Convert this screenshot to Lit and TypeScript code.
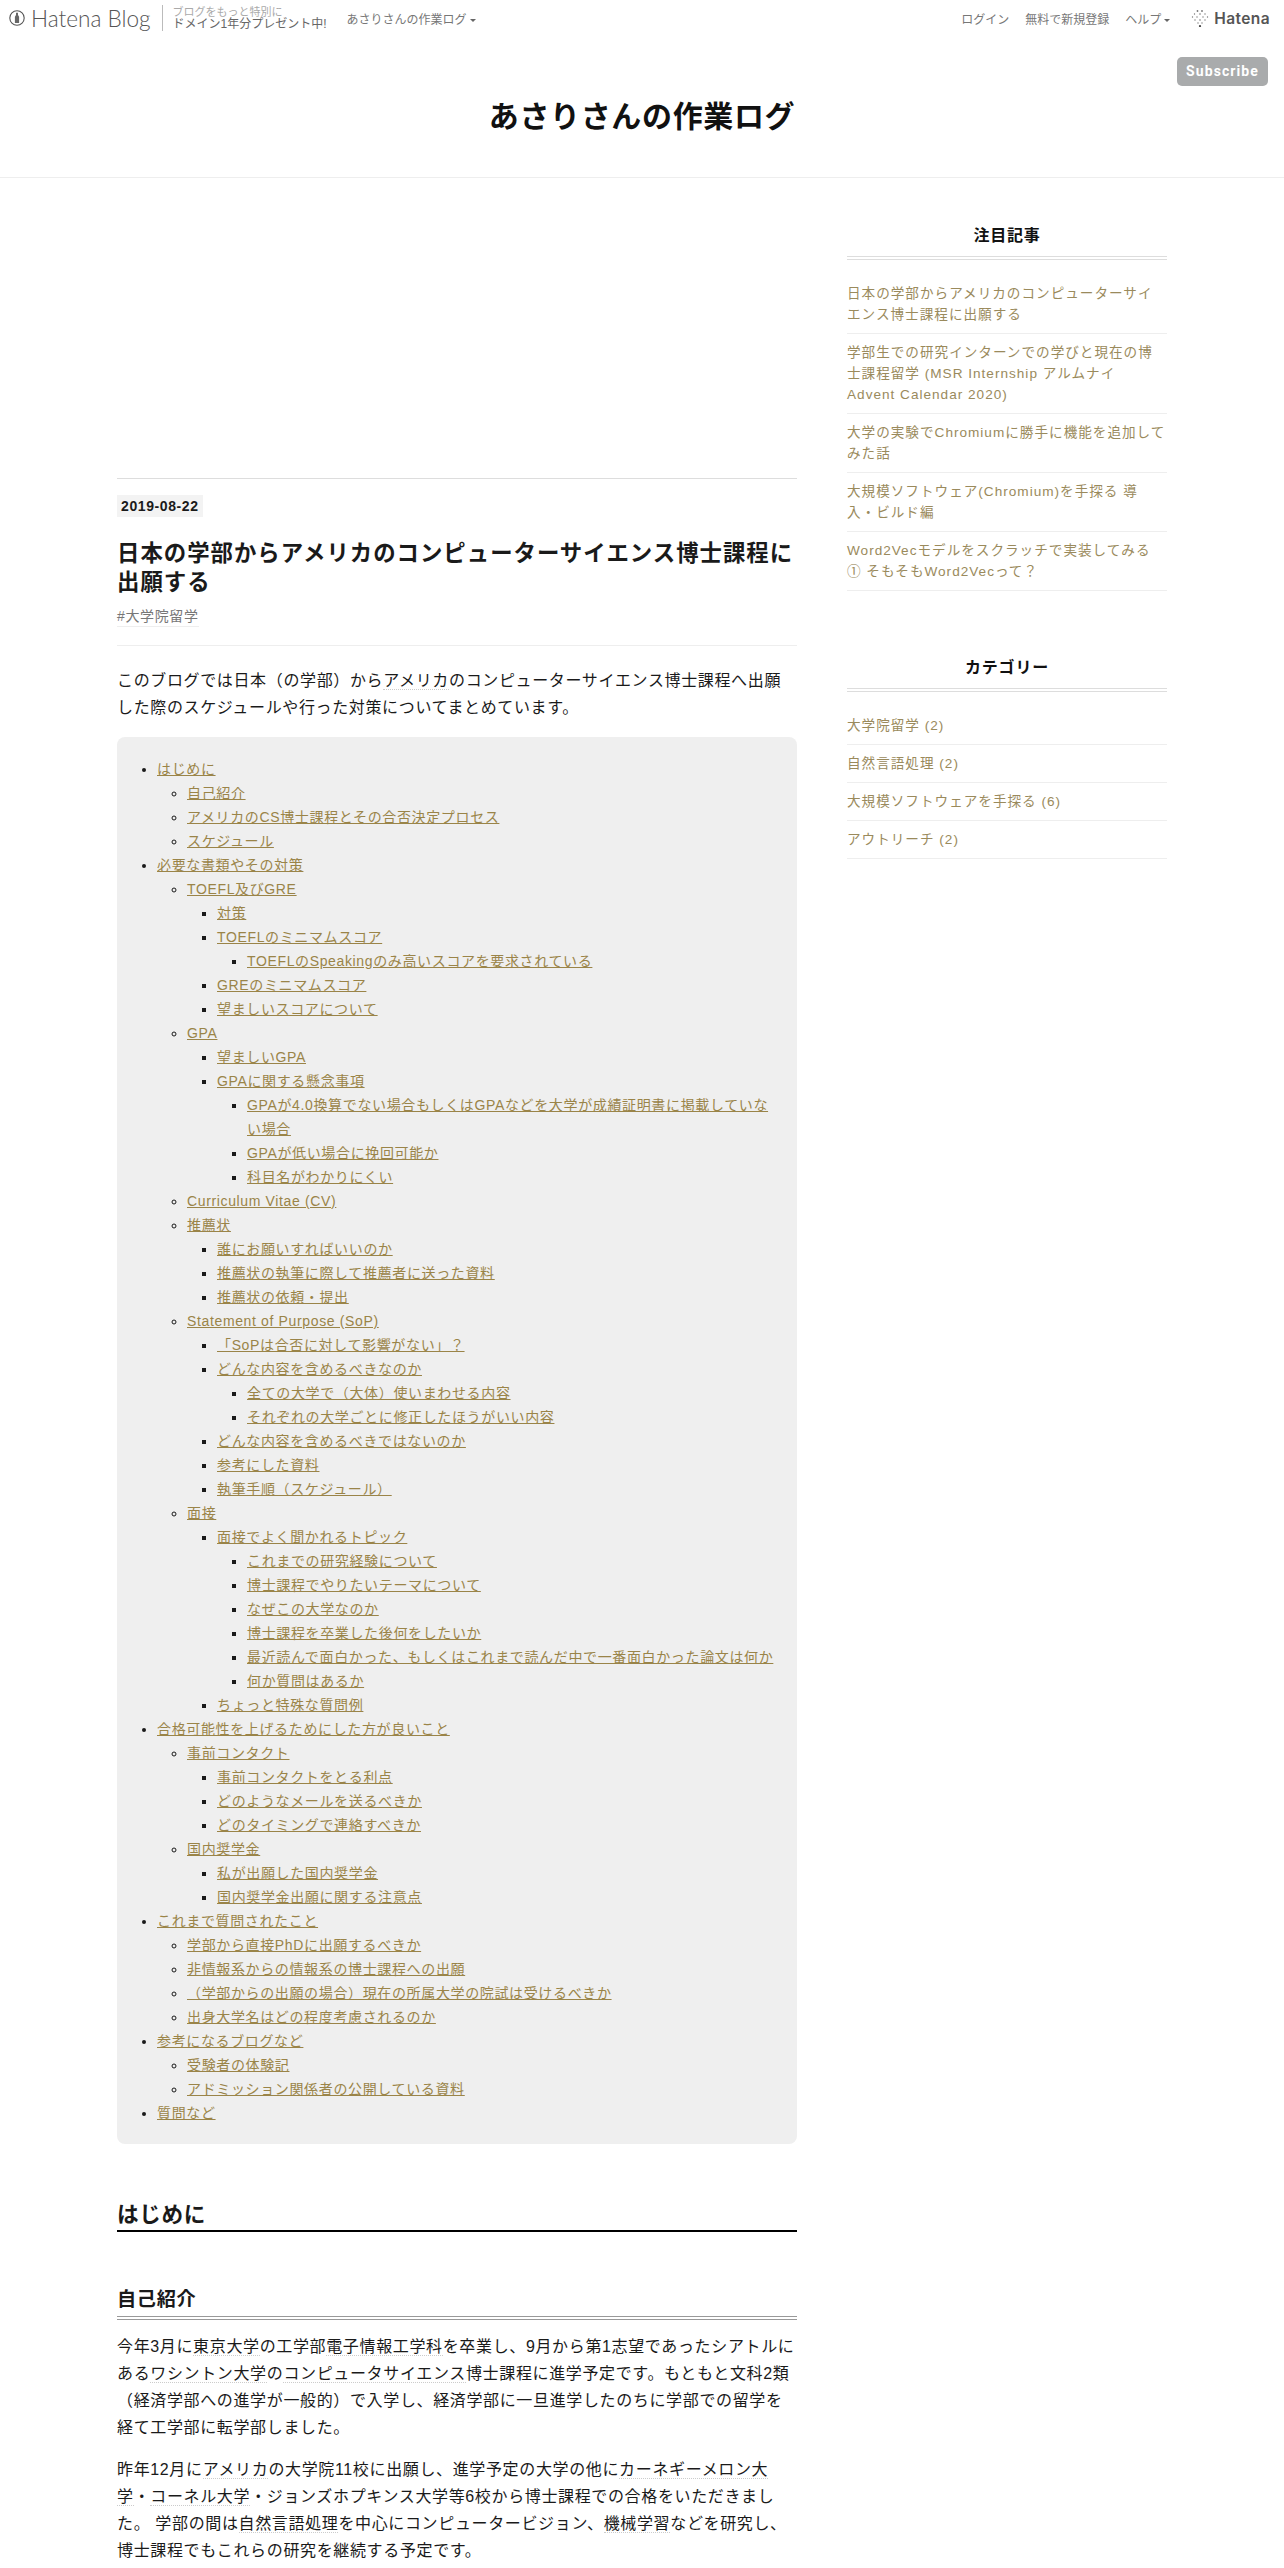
import { LitElement, html, css, TemplateResult } from "lit";
import { customElement } from "lit/decorators.js";

type Node = [string, Node[]?];
const toc: Node[] = [
  ["はじめに", [["自己紹介"], ["アメリカのCS博士課程とその合否決定プロセス"], ["スケジュール"]]],
  ["必要な書類やその対策", [
    ["TOEFL及びGRE", [["対策"], ["TOEFLのミニマムスコア", [["TOEFLのSpeakingのみ高いスコアを要求されている"]]], ["GREのミニマムスコア"], ["望ましいスコアについて"]]],
    ["GPA", [["望ましいGPA"], ["GPAに関する懸念事項", [["GPAが4.0換算でない場合もしくはGPAなどを大学が成績証明書に掲載していない場合"], ["GPAが低い場合に挽回可能か"], ["科目名がわかりにくい"]]]]],
    ["Curriculum Vitae (CV)"],
    ["推薦状", [["誰にお願いすればいいのか"], ["推薦状の執筆に際して推薦者に送った資料"], ["推薦状の依頼・提出"]]],
    ["Statement of Purpose (SoP)", [["「SoPは合否に対して影響がない」？"], ["どんな内容を含めるべきなのか", [["全ての大学で（大体）使いまわせる内容"], ["それぞれの大学ごとに修正したほうがいい内容"]]], ["どんな内容を含めるべきではないのか"], ["参考にした資料"], ["執筆手順（スケジュール）"]]],
    ["面接", [["面接でよく聞かれるトピック", [["これまでの研究経験について"], ["博士課程でやりたいテーマについて"], ["なぜこの大学なのか"], ["博士課程を卒業した後何をしたいか"], ["最近読んで面白かった、もしくはこれまで読んだ中で一番面白かった論文は何か"], ["何か質問はあるか"]]], ["ちょっと特殊な質問例"]]],
  ]],
  ["合格可能性を上げるためにした方が良いこと", [
    ["事前コンタクト", [["事前コンタクトをとる利点"], ["どのようなメールを送るべきか"], ["どのタイミングで連絡すべきか"]]],
    ["国内奨学金", [["私が出願した国内奨学金"], ["国内奨学金出願に関する注意点"]]],
  ]],
  ["これまで質問されたこと", [["学部から直接PhDに出願するべきか"], ["非情報系からの情報系の博士課程への出願"], ["（学部からの出願の場合）現在の所属大学の院試は受けるべきか"], ["出身大学名はどの程度考慮されるのか"]]],
  ["参考になるブログなど", [["受験者の体験記"], ["アドミッション関係者の公開している資料"]]],
  ["質問など"],
];

const featured = [
  html`日本の学部からアメリカのコンピューターサイ<br />エンス博士課程に出願する`,
  html`学部生での研究インターンでの学びと現在の博<br />士課程留学 (MSR Internship アルムナイ<br />Advent Calendar 2020)`,
  html`大学の実験でChromiumに勝手に機能を追加して<br />みた話`,
  html`大規模ソフトウェア(Chromium)を手探る 導<br />入・ビルド編`,
  html`Word2Vecモデルをスクラッチで実装してみる<br />① そもそもWord2Vecって？`,
];
const cats = ["大学院留学 (2)", "自然言語処理 (2)", "大規模ソフトウェアを手探る (6)", "アウトリーチ (2)"];

@customElement("app-root")
export class AppRoot extends LitElement {
  static styles = css`
    :host {
      display: block; height: 2568px; overflow: hidden; background: #fff; color: #1a1a1a;
      font-family: "Liberation Sans", "Noto Sans CJK JP", sans-serif;
      font-size: 16px; letter-spacing: 0.64px;
    }
    a { color: inherit; text-decoration: none; }
    .topbar { display: flex; align-items: center; height: 36px; color: #777; font-size: 12px; letter-spacing: 0; }
    .logo { display: flex; align-items: center; gap: 6px; margin-left: 9px; padding-right: 11px; height: 26px; border-right: 1px solid #bbb; font-family: Lato, sans-serif; font-weight: 300; font-size: 22.6px; color: #555; }
    .promo { display: flex; flex-direction: column; margin-left: 10px; font-size: 12px; line-height: 12.5px; color: #666; }
    .promo span:first-child { font-size: 11px; color: #aaa; }
    .blogname { margin-left: 20px; }
    .tri { display: inline-block; width: 0; height: 0; margin-left: 3px; vertical-align: middle; border: 3px solid transparent; border-top: 3px solid #666; border-bottom: 0; }
    .spacer { flex: 1; }
    .nav { display: flex; align-items: center; gap: 16px; }
    .hatena { display: flex; align-items: center; gap: 5px; margin: 0 14px 0 21px; font-family: Inter, sans-serif; font-weight: 600; font-size: 15.5px; letter-spacing: .4px; color: #555; }
    .header { display: grid; grid-template-columns: 1fr auto 1fr; height: 141px; border-bottom: 1px solid #eee; }
    .blogtitle { margin: 58px 0 0; font-size: 30px; line-height: 46px; font-weight: 700; letter-spacing: 0.64px; color: #111; grid-column: 2; }
    .sub { grid-column: 3; justify-self: end; align-self: start; margin: 21px 16px 0 0; width: 91px; height: 29px; line-height: 29px; text-align: center; background: #a9abac; color: #fff; border-radius: 5px; font-family: Roboto, sans-serif; font-weight: 700; font-size: 14px; letter-spacing: 1.1px; }
    .wrap { display: flex; gap: 50px; padding-left: 117px; }
    .main { width: 680px; padding-top: 300px; }
    .head { border-top: 1px solid #ddd; border-bottom: 1px solid #eee; height: 166px; }
    .date { display: inline-block; margin-top: 16px; padding: 0 4px; background: #f3f3f3; font-size: 14px; font-weight: 700; line-height: 22px; letter-spacing: .6px; }
    .title { margin: 22px 0 0; font-size: 22.4px; line-height: 29px; font-weight: 700; letter-spacing: 1px; }
    .tag { display: inline-block; margin-top: 10px; font-size: 14px; line-height: 19px; color: #777; border-bottom: 1px solid #eee; }
    p { margin: 0; line-height: 27px; }
    .intro { margin-top: 21px; }
    .toc { margin: 16px 0 0; padding: 20px 16px 19px 0; background: #efefef; border-radius: 8px; font-size: 14px; line-height: 24px; }
    .toc ul { margin: 0; padding-left: 30px; list-style: circle; }
    .toc > ul { padding-left: 40px; list-style: disc; }
    .toc ul ul { list-style: circle; }
    .toc ul ul ul, .toc ul ul ul ul { list-style: square; }
    .toc a { color: #9a8448; text-decoration: underline; }
    h2 { margin: 56px 0 0; font-size: 21.6px; line-height: 30px; font-weight: 700; border-bottom: 2px solid #000; }
    h3 { margin: 53px 0 0; font-size: 19.2px; line-height: 29px; font-weight: 700; border-bottom: 4px double #999; height: 31px; }
    .b1 { margin-top: 13px; }
    .b2 { margin-top: 15px; }
    .k { border-bottom: 1px dotted #ccc; }
    .side { width: 320px; padding-top: 46px; }
    .mod { margin-bottom: 65px; }
    .mod h4 { margin: 0 0 15px; padding-bottom: 8px; font-size: 16px; line-height: 24px; font-weight: 700; text-align: center; letter-spacing: .8px; border-bottom: 4px double #ddd; color: #111; }
    .mod a { display: block; padding: 8px 0; border-bottom: 1px solid #eee; font-size: 13.6px; line-height: 21px; letter-spacing: 1px; color: #9a8a5c; }
  `;

  private list(items: Node[]): TemplateResult {
    return html`<ul>${items.map(([t, c]) => html`<li><a href="#">${t}</a>${c ? this.list(c) : ""}</li>`)}</ul>`;
  }

  render() {
    return html`
      <div class="topbar">
        <div class="logo">
          <svg width="16" height="16" viewBox="0 0 16 16"><circle cx="8" cy="8" r="7.2" fill="none" stroke="#555" stroke-width="1.1"/><path d="M7 2.8h2v2.2l1.1 1.8v6.2H5.9V6.8L7 5z" fill="#666"/></svg>
          Hatena Blog
        </div>
        <div class="promo"><span>ブログをもっと特別に</span><span>ドメイン1年分プレゼント中!</span></div>
        <div class="blogname">あさりさんの作業ログ<i class="tri"></i></div>
        <div class="spacer"></div>
        <div class="nav"><span>ログイン</span><span>無料で新規登録</span><span>ヘルプ<i class="tri"></i></span></div>
        <div class="hatena">
          <svg width="18" height="18" viewBox="0 0 18 18" fill="#777"><circle cx="6.5" cy="2" r=".9"/><circle cx="11" cy="2" r=".9"/><circle cx="3.5" cy="5" r=".7"/><circle cx="9" cy="5" r=".8"/><circle cx="14" cy="5" r=".7"/><circle cx="1.5" cy="8" r=".7"/><circle cx="6" cy="8" r=".7"/><circle cx="12" cy="8" r=".7"/><circle cx="16.5" cy="8" r=".7"/><circle cx="4" cy="11" r=".7"/><circle cx="9" cy="11" r=".8"/><circle cx="14" cy="11" r=".7"/><circle cx="7" cy="14" r=".7"/><circle cx="11" cy="14" r=".7"/><circle cx="9" cy="17" r="1.1" fill="#444"/></svg>
          Hatena
        </div>
      </div>
      <div class="header">
        <h1 class="blogtitle">あさりさんの作業ログ</h1>
        <div class="sub">Subscribe</div>
      </div>
      <div class="wrap">
        <div class="main">
          <div class="head">
            <span class="date">2019-08-22</span>
            <h1 class="title">日本の学部からアメリカのコンピューターサイエンス博士課程に出願する</h1>
            <a class="tag" href="#">#大学院留学</a>
          </div>
          <p class="intro">このブログでは日本（の学部）から<span class="k">アメリカ</span>のコンピューターサイエンス博士課程へ出願した際のスケジュールや行った対策についてまとめています。</p>
          <div class="toc">${this.list(toc)}</div>
          <h2>はじめに</h2>
          <h3>自己紹介</h3>
          <p class="b1">今年3月に<span class="k">東京大学</span>の工学部<span class="k">電子情報工学科</span>を卒業し、9月から第1志望であったシアトルにある<span class="k">ワシントン大学</span>の<span class="k">コンピュータサイエンス</span>博士課程に進学予定です。もともと文科2類（経済学部への進学が一般的）で入学し、経済学部に一旦進学したのちに学部での留学を経て工学部に転学部しました。</p>
          <p class="b2">昨年12月に<span class="k">アメリカ</span>の大学院11校に出願し、進学予定の大学の他に<span class="k">カーネギーメロン大学</span>・<span class="k">コーネル大学</span>・ジョンズホプキンス大学等6校から博士課程での合格をいただきました。 学部の間は<span class="k">自然言語処理</span>を中心にコンピュータービジョン、<span class="k">機械学習</span>などを研究し、博士課程でもこれらの研究を継続する予定です。</p>
        </div>
        <div class="side">
          <div class="mod"><h4>注目記事</h4>${featured.map((t) => html`<a href="#">${t}</a>`)}</div>
          <div class="mod"><h4>カテゴリー</h4>${cats.map((t) => html`<a href="#">${t}</a>`)}</div>
        </div>
      </div>
    `;
  }
}
